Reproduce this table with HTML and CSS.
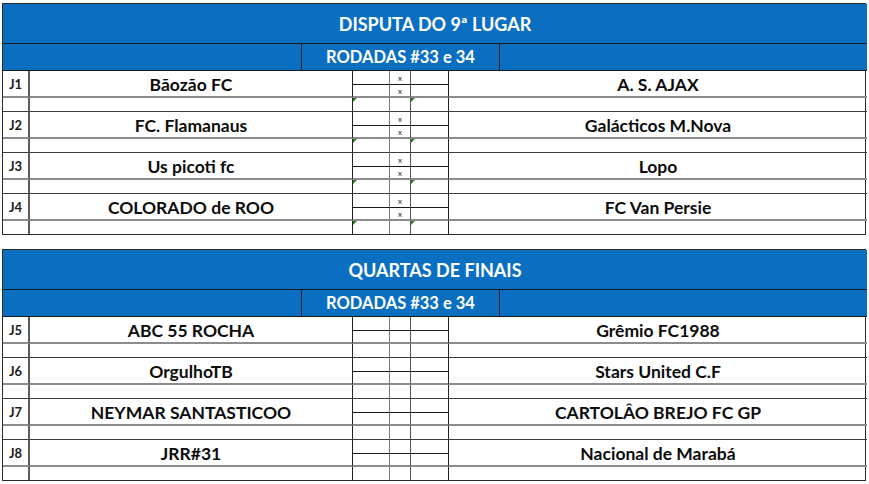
FILE: index.html
```html
<!DOCTYPE html>
<html lang="pt">
<head>
<meta charset="utf-8">
<title>Disputa</title>
<link rel="stylesheet" href="styles.css">
</head>
<body>
<div class="page">
  <div class="tbl">
    <div class="title">DISPUTA DO 9ª LUGAR</div>
    <div class="subrow"><div class="sub"></div><div class="sub mid">RODADAS #33 e 34</div><div class="sub"></div></div>

    <div class="j">J1</div><div class="team l">Bãozão FC</div>
    <div class="s s1 t"></div><div class="s s2 t">x</div><div class="s s3 t"></div>
    <div class="team r">A. S. AJAX</div>
    <div class="s s1 b"></div><div class="s s2 b">x</div><div class="s s3 b"></div>
    <div class="gap j0"></div><div class="gap l0"></div><div class="gap s1 mark"></div><div class="gap s2"></div><div class="gap s3 mark"></div><div class="gap r0"></div>

    <div class="j">J2</div><div class="team l">FC. Flamanaus</div>
    <div class="s s1 t"></div><div class="s s2 t">x</div><div class="s s3 t"></div>
    <div class="team r">Galácticos M.Nova</div>
    <div class="s s1 b"></div><div class="s s2 b">x</div><div class="s s3 b"></div>
    <div class="gap j0"></div><div class="gap l0"></div><div class="gap s1 mark"></div><div class="gap s2"></div><div class="gap s3 mark"></div><div class="gap r0"></div>

    <div class="j">J3</div><div class="team l">Us picoti fc</div>
    <div class="s s1 t"></div><div class="s s2 t">x</div><div class="s s3 t"></div>
    <div class="team r">Lopo</div>
    <div class="s s1 b"></div><div class="s s2 b">x</div><div class="s s3 b"></div>
    <div class="gap j0"></div><div class="gap l0"></div><div class="gap s1 mark"></div><div class="gap s2"></div><div class="gap s3 mark"></div><div class="gap r0"></div>

    <div class="j">J4</div><div class="team l">COLORADO de ROO</div>
    <div class="s s1 t"></div><div class="s s2 t">x</div><div class="s s3 t"></div>
    <div class="team r">FC Van Persie</div>
    <div class="s s1 b"></div><div class="s s2 b">x</div><div class="s s3 b"></div>
    <div class="gap j0"></div><div class="gap l0"></div><div class="gap s1 mark"></div><div class="gap s2"></div><div class="gap s3 mark"></div><div class="gap r0"></div>
  </div>

  <div class="tbl">
    <div class="title">QUARTAS DE FINAIS</div>
    <div class="subrow"><div class="sub"></div><div class="sub mid">RODADAS #33 e 34</div><div class="sub"></div></div>

    <div class="j">J5</div><div class="team l">ABC 55 ROCHA</div>
    <div class="s s1 t"></div><div class="s s2 t"></div><div class="s s3 t"></div>
    <div class="team r">Grêmio FC1988</div>
    <div class="s s1 b"></div><div class="s s2 b"></div><div class="s s3 b"></div>
    <div class="gap j0"></div><div class="gap l0"></div><div class="gap s1"></div><div class="gap s2"></div><div class="gap s3"></div><div class="gap r0"></div>

    <div class="j">J6</div><div class="team l">OrgulhoTB</div>
    <div class="s s1 t"></div><div class="s s2 t"></div><div class="s s3 t"></div>
    <div class="team r">Stars United C.F</div>
    <div class="s s1 b"></div><div class="s s2 b"></div><div class="s s3 b"></div>
    <div class="gap j0"></div><div class="gap l0"></div><div class="gap s1"></div><div class="gap s2"></div><div class="gap s3"></div><div class="gap r0"></div>

    <div class="j">J7</div><div class="team l">NEYMAR SANTASTICOO</div>
    <div class="s s1 t"></div><div class="s s2 t"></div><div class="s s3 t"></div>
    <div class="team r">CARTOLÂO BREJO FC GP</div>
    <div class="s s1 b"></div><div class="s s2 b"></div><div class="s s3 b"></div>
    <div class="gap j0"></div><div class="gap l0"></div><div class="gap s1"></div><div class="gap s2"></div><div class="gap s3"></div><div class="gap r0"></div>

    <div class="j">J8</div><div class="team l">JRR#31</div>
    <div class="s s1 t"></div><div class="s s2 t"></div><div class="s s3 t"></div>
    <div class="team r">Nacional de Marabá</div>
    <div class="s s1 b"></div><div class="s s2 b"></div><div class="s s3 b"></div>
    <div class="gap j0"></div><div class="gap l0"></div><div class="gap s1"></div><div class="gap s2"></div><div class="gap s3"></div><div class="gap r0"></div>
  </div>
</div>
</body>
</html>
```

FILE: styles.css
```css
* { box-sizing: border-box; }
html, body { margin: 0; padding: 0; background: #ffffff; }
body { font-family: Lato, "Open Sans", sans-serif; color: #111; }

.page {
  padding: 3px 3px 0 2px;
  display: flex;
  flex-direction: column;
  gap: 14px;
  width: 869px;
}

.tbl {
  width: 864px;
  display: grid;
  grid-template-columns: 27px 323px 37px 21px 38px 418px;
  grid-template-rows: 40px 27px repeat(3, 14px 13px 14px) 14px 13px 13px;
  border: 1px solid #2a2a2a;
}

.title {
  grid-column: 1 / -1;
  background: #0b6fc1;
  color: #fff;
  font-weight: 700;
  font-size: 18px;
  display: flex;
  align-items: center;
  justify-content: center;
  border-bottom: 1px solid #1a1a1a;
  padding-top: 1px;
}

.subrow {
  grid-column: 1 / -1;
  display: grid;
  grid-template-columns: 298px 199px 1fr;
  background: #0b6fc1;
  border-bottom: 1px solid #1a1a1a;
}
.sub {
  color: #fff;
  font-weight: 700;
  font-size: 16.5px;
  display: flex;
  align-items: center;
  justify-content: center;
}
.sub.mid {
  border-left: 1px solid #1a1a1a;
  border-right: 1px solid #1a1a1a;
}

.j {
  grid-row: span 2;
  font-size: 13px;
  font-weight: 700;
  display: flex;
  align-items: center;
  justify-content: center;
  border-right: 2px solid #5c5c5c;
  border-bottom: 2px solid #8c8c8c;
  color: #1a1a1a;
  padding-top: 1px;
}

.team {
  grid-row: span 2;
  font-size: 17.5px;
  font-weight: 700;
  display: flex;
  align-items: center;
  justify-content: center;
  border-bottom: 2px solid #8c8c8c;
  white-space: nowrap;
  color: #0d0d0d;
}
.team.l { border-right: 1px solid #222; padding-top: 1px; }
.team.r { padding-top: 1px; }

.s {
  font-size: 8px;
  line-height: 1;
  display: flex;
  align-items: center;
  justify-content: center;
  color: #222;
}
.s.t { border-bottom: 1px solid #1a1a1a; }
.s.b { border-bottom: 2px solid #8c8c8c; }
.s1 { border-right: 1px solid #7a7a7a; }
.s2 { border-right: 1px solid #555; }
.s3 { border-right: 1px solid #222; }

.gap { border-bottom: 1px solid #3c3c3c; }
.gap.j0 { border-right: 2px solid #5c5c5c; }
.gap.l0 { border-right: 1px solid #222; }
.gap.s1 { border-right: 1px solid #7a7a7a; }
.gap.s2 { border-right: 1px solid #555; }
.gap.s3 { border-right: 1px solid #222; }
.tbl > .gap:nth-last-child(-n+6) { border-bottom: none; }

.mark { position: relative; }
.mark::before {
  content: "";
  position: absolute;
  left: 0;
  top: 0;
  border-top: 4px solid #2f7d22;
  border-right: 4px solid transparent;
}
```
